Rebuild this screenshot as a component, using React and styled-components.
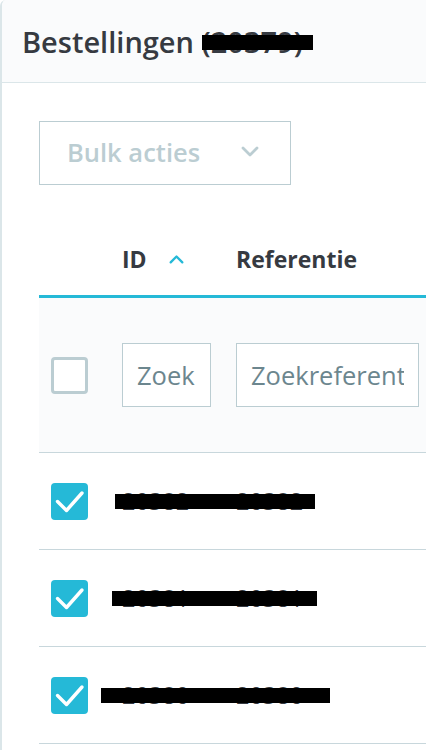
import React from "react";
import styled, { createGlobalStyle } from "styled-components";

const GlobalStyle = createGlobalStyle`
  body {
    margin: 0;
    background: #ffffff;
    font-family: "Open Sans", "Noto Sans", sans-serif;
    color: #363a41;
    overflow: hidden;
  }
`;

const Card = styled.div`
  width: 460px;
  min-height: 750px;
  border-left: 2px solid #dbe6e9;
  border-top-left-radius: 6px;
  overflow: hidden;
`;

const CardHeader = styled.div`
  height: 82px;
  display: flex;
  align-items: center;
  padding-left: 20px;
  background: #fafbfc;
  border-bottom: 1px solid #dbe6e9;
`;

const Title = styled.h1`
  margin: 0;
  font-size: 29px;
  font-weight: 600;
  color: #363a41;
  white-space: nowrap;
`;

const Redacted = styled.span`
  position: relative;
  &::after {
    content: "";
    position: absolute;
    left: ${p => p.$left || 0}px;
    right: ${p => p.$right || 0}px;
    top: 50%;
    height: 15px;
    transform: translateY(-40%);
    background: #000;
  }
`;

const Bar = styled.span`
  position: absolute;
  left: ${p => p.$left}px;
  top: 41px;
  width: ${p => p.$width}px;
  height: 15px;
  background: #000;
`;

const CardBody = styled.div`
  padding: 38px 0 0 37px;
`;

const BulkButton = styled.button`
  width: 252px;
  height: 64px;
  display: flex;
  align-items: center;
  justify-content: space-between;
  padding: 0 31px 2px 27px;
  background: #fff;
  border: 1px solid #bbcdd2;
  border-radius: 0;
  font-family: inherit;
  font-size: 25.5px;
  font-weight: 600;
  color: #bbcdd2;
`;

const Table = styled.div`
  margin-top: 37px;
`;

const Row = styled.div`
  position: relative;
  display: grid;
  grid-template-columns: 71px 114px 200px;
  align-items: center;
  height: ${p => p.$height}px;
  background: ${p => p.$bg || "#fff"};
  border-bottom: ${p => p.$border || "1px solid #c8d7dc"};
`;

const Cell = styled.div`
  display: flex;
  align-items: center;
  gap: 22px;
  padding-left: 12px;
  white-space: nowrap;
`;

const HeadText = styled.span`
  font-size: 23px;
  font-weight: 700;
  color: #363a41;
`;

const BodyText = styled.span`
  font-size: 23.5px;
  color: #363a41;
`;

const Box = styled.span`
  box-sizing: border-box;
  width: 37px;
  height: 37px;
  display: flex;
  align-items: center;
  justify-content: center;
  border-radius: 4px;
  background: ${p => (p.$checked ? "#25b9d7" : "#fff")};
  border: ${p => (p.$checked ? "none" : "3px solid #bbcdd2")};
`;

const FilterInput = styled.input`
  box-sizing: border-box;
  width: ${p => p.$width}px;
  height: 64px;
  padding: 0 14px;
  border: 1px solid #bbcdd2;
  background: #fff;
  font-family: inherit;
  font-size: 25.5px;
  color: #6c868e;
  &::placeholder {
    color: #6c868e;
    opacity: 1;
  }
`;

const Chevron = ({ up, color, w, h }) => (
  <svg width={w} height={h} viewBox="0 0 18 12" fill="none">
    <path
      d={up ? "M2 10 L9 3 L16 10" : "M2 2 L9 9 L16 2"}
      stroke={color}
      strokeWidth="2.8"
      strokeLinecap="round"
      strokeLinejoin="round"
    />
  </svg>
);

const Check = () => (
  <svg width="37" height="37" viewBox="0 0 37 37" fill="none">
    <path
      d="M6.5 18.5 L15.5 27.5 L31 10"
      stroke="#fff"
      strokeWidth="3.4"
      strokeLinecap="round"
      strokeLinejoin="round"
    />
  </svg>
);

const orders = [
  { id: "20382", ref: "20382", bar: [76, 200] },
  { id: "20381", ref: "20381", bar: [73, 205] },
  { id: "20380", ref: "20380", bar: [62, 229] },
];

const App = () => (
  <>
    <GlobalStyle />
    <Card>
      <CardHeader>
        <Title>
          Bestellingen <Redacted $left={0} $right={-10}>(20379)</Redacted>
        </Title>
      </CardHeader>
      <CardBody>
        <BulkButton>
          Bulk acties
          <Chevron color="#bbcdd2" w={18} h={12} />
        </BulkButton>
        <Table>
          <Row $height={73} $border="3px solid #25b9d7">
            <Cell />
            <Cell>
              <HeadText>ID</HeadText>
              <Chevron up color="#25b9d7" w={15} h={10} />
            </Cell>
            <Cell>
              <HeadText>Referentie</HeadText>
            </Cell>
          </Row>
          <Row $height={154} $bg="#fafbfc">
            <Cell>
              <Box />
            </Cell>
            <Cell>
              <FilterInput $width={89} placeholder="Zoek" />
            </Cell>
            <Cell>
              <FilterInput $width={183} placeholder="Zoekreferentie" />
            </Cell>
          </Row>
          {orders.map(o => (
            <Row key={o.id} $height={96}>
              <Cell>
                <Box $checked>
                  <Check />
                </Box>
              </Cell>
              <Cell>
                <BodyText>{o.id}</BodyText>
              </Cell>
              <Cell>
                <BodyText>{o.ref}</BodyText>
              </Cell>
              <Bar $left={o.bar[0]} $width={o.bar[1]} />
            </Row>
          ))}
        </Table>
      </CardBody>
    </Card>
  </>
);

export default App;
